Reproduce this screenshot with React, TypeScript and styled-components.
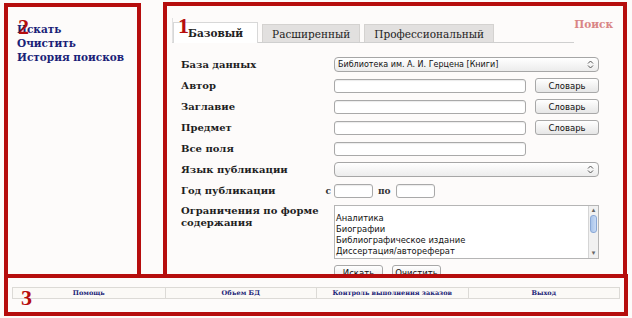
import React, { FC } from "react";
import styled, { createGlobalStyle } from "styled-components";

const RED = "#b60d0d";
const NAVY = "#1b1f78";

const GlobalStyle = createGlobalStyle`
  html, body {
    margin: 0;
    padding: 0;
    background: #fdfbfa;
  }
  body {
    font-family: "DejaVu Serif", "Liberation Serif", serif;
    color: #1e1e1e;
  }
`;

const fields = [
  { label: "Автор", dictionary: true },
  { label: "Заглавие", dictionary: true },
  { label: "Предмет", dictionary: true },
  { label: "Все поля", dictionary: false },
];

const contentTypes = [
  "Аналитика",
  "Биографии",
  "Библиографическое издание",
  "Диссертация/автореферат",
];

const footerLinks = ["Помощь", "Объем БД", "Контроль выполнения заказов", "Выход"];

const SelectArrows: FC = () => (
  <svg width="7" height="9" viewBox="0 0 7 9">
    <path d="M1 3.5 L3.5 1 L6 3.5" fill="none" stroke="#555" strokeWidth="1" />
    <path d="M1 5.5 L3.5 8 L6 5.5" fill="none" stroke="#555" strokeWidth="1" />
  </svg>
);

const App: FC = () => {
  return (
    <>
      <GlobalStyle />
      <StyledPage>
        <StyledTop>
          <StyledSidePanel>
            <StyledMarker $left={10} $top={10}>2</StyledMarker>
            <StyledNavLink>Искать</StyledNavLink>
            <StyledNavLink>Очистить</StyledNavLink>
            <StyledNavLink>История поисков</StyledNavLink>
          </StyledSidePanel>

          <StyledMainPanel>
            <StyledMarker $left={11} $top={10}>1</StyledMarker>
            <StyledHeader>
              <StyledTabs>
                <StyledTab $active>Базовый</StyledTab>
                <StyledTab>Расширенный</StyledTab>
                <StyledTab>Профессиональный</StyledTab>
              </StyledTabs>
              <StyledSearchTitle>Поиск</StyledSearchTitle>
            </StyledHeader>

            <StyledForm>
              <StyledLabel>База данных</StyledLabel>
              <StyledSelect>
                <span>Библиотека им. А. И. Герцена [Книги]</span>
                <SelectArrows />
              </StyledSelect>

              {fields.map((field) => (
                <React.Fragment key={field.label}>
                  <StyledLabel>{field.label}</StyledLabel>
                  <StyledControlRow>
                    <StyledInput />
                    {field.dictionary ? <StyledButton>Словарь</StyledButton> : null}
                  </StyledControlRow>
                </React.Fragment>
              ))}

              <StyledLabel>Язык публикации</StyledLabel>
              <StyledSelect>
                <span />
                <SelectArrows />
              </StyledSelect>

              <StyledLabelSplit>
                <span>Год публикации</span>
                <StyledSmallText>с</StyledSmallText>
              </StyledLabelSplit>
              <StyledYearRow>
                <StyledYearInput />
                <StyledSmallText>по</StyledSmallText>
                <StyledYearInput />
              </StyledYearRow>

              <StyledLabel $top>
                Ограничения по форме
                <br />
                содержания
              </StyledLabel>
              <StyledListBox>
                <StyledListItems>
                  {contentTypes.map((item) => (
                    <StyledListItem key={item}>{item}</StyledListItem>
                  ))}
                </StyledListItems>
                <StyledScrollbar>
                  <StyledScrollArrow>▴</StyledScrollArrow>
                  <StyledScrollTrack>
                    <StyledScrollThumb />
                  </StyledScrollTrack>
                  <StyledScrollArrow>▾</StyledScrollArrow>
                </StyledScrollbar>
              </StyledListBox>

              <span />
              <StyledActions>
                <StyledButton $wide>Искать</StyledButton>
                <StyledButton $wide>Очистить</StyledButton>
              </StyledActions>
            </StyledForm>
          </StyledMainPanel>
        </StyledTop>

        <StyledFooter>
          <StyledMarker $left={13} $top={10}>3</StyledMarker>
          <StyledFooterTable>
            {footerLinks.map((link) => (
              <StyledFooterCell key={link}>{link}</StyledFooterCell>
            ))}
          </StyledFooterTable>
        </StyledFooter>
      </StyledPage>
    </>
  );
};

const StyledPage = styled.div`
  width: 632px;
  height: 318px;
  box-sizing: border-box;
  padding: 2px 4px 0 4px;
  overflow: hidden;
`;

const StyledTop = styled.div`
  display: flex;
  align-items: flex-start;
  gap: 22px;
  height: 276px;
`;

const StyledSidePanel = styled.div`
  position: relative;
  width: 137px;
  height: 275px;
  margin-top: 1px;
  box-sizing: border-box;
  border: 4px solid ${RED};
  padding: 15px 0 0 9px;
  display: flex;
  flex-direction: column;
`;

const StyledNavLink = styled.a`
  font-family: "DejaVu Serif", serif;
  font-weight: bold;
  font-size: 10.5px;
  line-height: 14px;
  color: ${NAVY};
  white-space: nowrap;
`;

const StyledMarker = styled.span<{ $left: number; $top: number }>`
  position: absolute;
  left: ${(p) => p.$left}px;
  top: ${(p) => p.$top}px;
  font-family: "Liberation Serif", serif;
  font-weight: bold;
  font-size: 22px;
  line-height: 20px;
  color: ${RED};
  z-index: 2;
`;

const StyledMainPanel = styled.div`
  position: relative;
  width: 464px;
  height: 276px;
  box-sizing: border-box;
  border: 4px solid ${RED};
  overflow: hidden;
  padding: 0 0 0 5px;
`;

const StyledHeader = styled.div`
  display: flex;
  align-items: flex-start;
  justify-content: space-between;
  margin-top: 12px;
  padding-right: 10px;
`;

const StyledTabs = styled.div`
  display: flex;
  align-items: flex-end;
  gap: 4px;
  width: 418px;
  border-bottom: 1px solid #cfcfcf;
  border-left: 1px solid #e2e2e2;
  padding-top: 4px;
`;

const StyledTab = styled.div<{ $active?: boolean }>`
  padding: 0 ${(p) => (p.$active ? "14px" : "9px")};
  display: flex;
  align-items: center;
  font-family: "DejaVu Serif", serif;
  font-size: 10.5px;
  font-weight: ${(p) => (p.$active ? "bold" : "normal")};
  background: ${(p) => (p.$active ? "#ffffff" : "#e2e0df")};
  border: 1px solid ${(p) => (p.$active ? "#d8d8d8" : "#d4d2d0")};
  border-bottom: none;
  margin-bottom: ${(p) => (p.$active ? "-1px" : "0")};
  height: ${(p) => (p.$active ? "20px" : "17px")};
  color: #222;
`;

const StyledSearchTitle = styled.div`
  font-family: "DejaVu Serif", serif;
  font-weight: bold;
  font-size: 10.5px;
  color: #d98585;
`;

const StyledForm = styled.div`
  display: grid;
  grid-template-columns: 153px 265px;
  grid-auto-rows: minmax(21px, auto);
  align-items: center;
  margin: 11px 0 0 9px;
`;

const StyledLabel = styled.div<{ $top?: boolean }>`
  font-family: "DejaVu Serif", serif;
  font-weight: bold;
  font-size: 10px;
  line-height: 12px;
  color: #1e1e1e;
  align-self: ${(p) => (p.$top ? "start" : "center")};
  padding-top: ${(p) => (p.$top ? "4px" : "0")};
  white-space: nowrap;
`;

const StyledLabelSplit = styled(StyledLabel)`
  display: flex;
  justify-content: space-between;
  padding-right: 3px;
`;

const StyledSmallText = styled.span`
  font-family: "DejaVu Serif", serif;
  font-weight: bold;
  font-size: 9px;
  color: #333;
`;

const StyledControlRow = styled.div`
  display: flex;
  align-items: center;
  gap: 9px;
`;

const StyledYearRow = styled(StyledControlRow)`
  gap: 5px;
`;

const StyledInput = styled.div`
  width: 192px;
  height: 14px;
  box-sizing: border-box;
  background: #fff;
  border: 1px solid #a9a9a9;
  border-radius: 3px;
  box-shadow: inset 0 1px 1px rgba(0, 0, 0, 0.08);
`;

const StyledYearInput = styled(StyledInput)`
  width: 39px;
`;

const StyledSelect = styled.div`
  width: 265px;
  height: 15px;
  box-sizing: border-box;
  display: flex;
  align-items: center;
  justify-content: space-between;
  padding: 0 4px 0 3px;
  border: 1px solid #a6a6a6;
  border-radius: 4px;
  background: linear-gradient(#ffffff, #ececec);
  font-family: "DejaVu Sans", sans-serif;
  font-size: 8px;
  color: #111;
`;

const StyledButton = styled.div<{ $wide?: boolean }>`
  width: ${(p) => (p.$wide ? "49px" : "64px")};
  height: 15px;
  box-sizing: border-box;
  display: flex;
  align-items: center;
  justify-content: center;
  border: 1px solid #a8a8a8;
  border-radius: 3px;
  background: linear-gradient(#ffffff, #e6e6e6);
  font-family: "DejaVu Sans", sans-serif;
  font-size: 8.5px;
  color: #111;
`;

const StyledListBox = styled.div`
  width: 265px;
  height: 54px;
  margin-top: 4px;
  box-sizing: border-box;
  display: flex;
  border: 1px solid #b5b5b5;
  background: #fff;
`;

const StyledListItems = styled.div`
  flex: 1;
  padding: 7px 0 0 1px;
  overflow: hidden;
`;

const StyledListItem = styled.div`
  font-family: "DejaVu Sans", sans-serif;
  font-size: 8.4px;
  line-height: 11px;
  color: #111;
  white-space: nowrap;
`;

const StyledScrollbar = styled.div`
  width: 9px;
  display: flex;
  flex-direction: column;
  border-left: 1px solid #d5d5d5;
  background: #f1f1f1;
`;

const StyledScrollArrow = styled.div`
  height: 9px;
  font-size: 7px;
  line-height: 9px;
  text-align: center;
  color: #666;
  font-family: "DejaVu Sans", sans-serif;
`;

const StyledScrollTrack = styled.div`
  flex: 1;
  padding: 0 1px;
`;

const StyledScrollThumb = styled.div`
  height: 18px;
  border-radius: 3px;
  background: linear-gradient(90deg, #a9c4ea, #c8daf4);
  border: 1px solid #8aa8d6;
  box-sizing: border-box;
`;

const StyledActions = styled.div`
  display: flex;
  gap: 9px;
  margin-top: 6px;
  align-self: start;
`;

const StyledFooter = styled.div`
  position: relative;
  width: 624px;
  height: 42px;
  margin-top: -4px;
  box-sizing: border-box;
  border: 4px solid ${RED};
  padding: 9px 4px 0 4px;
`;

const StyledFooterTable = styled.div`
  display: grid;
  grid-template-columns: repeat(4, 1fr);
  border: 1px solid #dcdad6;
  background: #fbf9f6;
`;

const StyledFooterCell = styled.div`
  height: 10px;
  display: flex;
  align-items: center;
  justify-content: center;
  border-left: 1px solid #dcdad6;
  font-family: "DejaVu Serif", serif;
  font-weight: bold;
  font-size: 6.5px;
  color: ${NAVY};

  &:first-child {
    border-left: none;
  }
`;

export default App;
